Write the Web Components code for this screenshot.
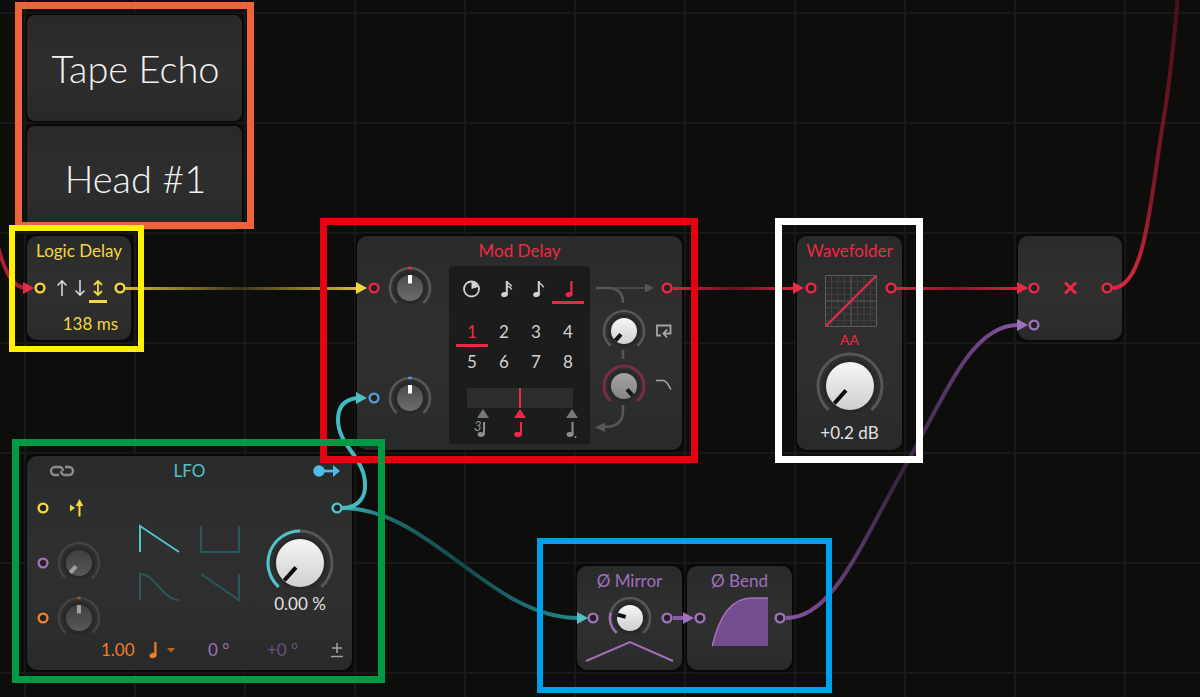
<!DOCTYPE html>
<html lang="en">
<head>
<meta charset="utf-8">
<meta name="viewport" content="width=device-width, initial-scale=1">
<title>Tape Echo patch</title>
<style>
  html, body { margin: 0; background: #0d0d0c; }
  body { font-family: Lato, "Open Sans", sans-serif; font-size: 17px; color: #e2e2e2; }
</style>
</head>
<body>
<patch-canvas>
  <comment-card style="--x:27px;--y:15px;--w:215px;--h:106px">Tape Echo</comment-card>
  <comment-card style="--x:27px;--y:126px;--w:215px;--h:104px">Head #1</comment-card>
  <logic-delay style="--x:27px;--y:236px;--w:104px;--h:104px"></logic-delay>
  <mod-delay style="--x:357px;--y:236px;--w:325px;--h:214px"></mod-delay>
  <wave-folder style="--x:797px;--y:236px;--w:105px;--h:214px"></wave-folder>
  <multiply-node style="--x:1018px;--y:236px;--w:104px;--h:104px"></multiply-node>
  <lfo-module style="--x:27px;--y:456px;--w:325px;--h:214px"></lfo-module>
  <phase-mirror style="--x:577px;--y:566px;--w:105px;--h:104px"></phase-mirror>
  <phase-bend style="--x:687px;--y:566px;--w:105px;--h:104px"></phase-bend>
  <patch-wires slot="overlay"></patch-wires>
  <group-frame slot="overlay" style="--x:15px;--y:2px;--w:239px;--h:227px;--c:#ef633b;--t:7px"></group-frame>
  <group-frame slot="overlay" style="--x:9px;--y:225px;--w:135px;--h:127px;--c:#fff200;--t:6px"></group-frame>
  <group-frame slot="overlay" style="--x:320px;--y:218px;--w:378px;--h:245px;--c:#e60012;--t:7px"></group-frame>
  <group-frame slot="overlay" style="--x:775px;--y:218px;--w:148px;--h:245px;--c:#ffffff;--t:7px"></group-frame>
  <group-frame slot="overlay" style="--x:12px;--y:439px;--w:373px;--h:244px;--c:#009944;--t:7px"></group-frame>
  <group-frame slot="overlay" style="--x:537px;--y:538px;--w:295px;--h:155px;--c:#00a0e9;--t:6px"></group-frame>
</patch-canvas>

<script>
const RED = '#ed2a45', YELLOW = '#f5d742', CYAN = '#4fc4cb', PURPLE = '#a070bd', ORANGE = '#f07f27', BLUE = '#5a9be0';

const reset = `
  *, *::before { box-sizing: border-box; }
  button { font: inherit; color: inherit; background: none; border: 0; padding: 0; margin: 0; line-height: inherit; text-align: left; }
  svg { display: block; }
  fieldset { border: 0; margin: 0; padding: 0; min-width: 0; }
  output { display: block; }
`;

function element(name, css, markup, ready) {
  const template = document.createElement('template');
  template.innerHTML = `<style>${reset}${css}</style>${markup}`;
  customElements.define(name, class extends HTMLElement {
    constructor() {
      super();
      this.attachShadow({ mode: 'open' }).append(template.content.cloneNode(true));
    }
    connectedCallback() { if (ready) ready(this, this.shadowRoot); }
  });
}

/* Free canvas with its 110px grid; each slotted node brings its own place. */
element('patch-canvas', `
  :host { display: block; position: relative; min-height: 100vh; overflow: hidden;
    background:
      linear-gradient(90deg, #191919 2px, transparent 2px) 24px 0 / 110px 110px,
      linear-gradient(#191919 2px, transparent 2px) 0 12px / 110px 110px, #0d0d0c; }
  ::slotted(*) { position: absolute; left: var(--x, 0); top: var(--y, 0); width: var(--w, 100%); min-height: var(--h, 0); }
  ::slotted(patch-wires) { bottom: 0; }
`, `<slot></slot><slot name="overlay"></slot>`);

element('group-frame', `
  :host { display: block; box-sizing: border-box; border: var(--t) solid var(--c); pointer-events: none; }
`, ``);

element('comment-card', `
  :host { display: flex; align-items: center; justify-content: center; border-radius: 8px;
    background: linear-gradient(#292929, #2e2e2e 50%, #272928); box-shadow: 0 0 3px 1px #050505; }
  h1 { margin: 0; padding-left: 2px; font-size: 38px; line-height: 44px; font-weight: 300; color: #f2f2f2; }
`, `<h1><slot></slot></h1>`);

element('module-card', `
  :host { display: block; min-height: inherit; border-radius: 10px;
    background: linear-gradient(#292a2a, #2f2f2f 40%, #2e2e2e 70%, #282a29); box-shadow: 0 0 3px 1px #050505; }
  header { display: grid; grid-template-columns: 1fr auto 1fr; align-items: center; height: 30px; padding: 0 12px; margin: 0 -12px; }
  :host([wide]) header { padding: 0 11px; margin: 0; }
  :host([untitled]) header { display: none; }
  h2 { margin: 0; font-size: 17px; line-height: 30px; font-weight: 400; color: var(--accent); white-space: nowrap; }
  .tail { justify-self: end; }
`, `<header><div><slot name="lead"></slot></div><h2><slot name="title"></slot></h2><div class="tail"><slot name="tail"></slot></div></header><slot></slot>`);

element('signal-port', `
  :host { display: block; width: 12px; height: 12px; flex: none; }
`, `<svg width="12" height="12"><circle cx="6" cy="6" r="4.4" fill="#222" stroke="currentColor" stroke-width="2.4"/></svg>`,
(host) => { host.style.color = host.getAttribute('color'); });

/* Rotary control: angles are in degrees clockwise from twelve o'clock. */
element('dial-knob', `
  :host { display: block; position: relative; width: 44px; height: 44px; flex: none; }
  :host([big]) { width: 68px; height: 68px; }
  input { position: absolute; inset: 0; width: 100%; height: 100%; margin: 0; opacity: 0; }
`, `<svg></svg><input type="range" min="-138" max="138">`,
(host, root) => {
  const get = (n, d) => host.getAttribute(n) || d;
  const big = host.hasAttribute('big'), c = big ? 34 : 22, R = big ? 32 : 20, r = big ? 24 : 13;
  const pt = (a, d) => `${c + d * Math.sin(a * Math.PI / 180)} ${c - d * Math.cos(a * Math.PI / 180)}`;
  const arc = (a, b, col) => `<path d="M${pt(a, R)} A${R} ${R} 0 ${b - a > 180 ? 1 : 0} 1 ${pt(b, R)}" fill="none" stroke="${col}" stroke-width="${big ? 3 : 2.6}"/>`;
  const angle = +get('angle', 0), face = get('face', 'dark'), to = get('to', '');
  const faces = { dark: ['#4c4c4c', '#6c6c6c'], dim: ['#3f3f3f', '#585858'], light: ['#f6f6f6', '#cfcfcf'], gray: ['#a4a4a4', '#868686'] };
  const svg = root.querySelector('svg');
  svg.setAttribute('width', 2 * c); svg.setAttribute('height', 2 * c);
  svg.innerHTML = `<defs><linearGradient id="f" x1="0" y1="0" x2="0" y2="1"><stop stop-color="${faces[face][0]}"/><stop offset="1" stop-color="${faces[face][1]}"/></linearGradient></defs>
    <circle cx="${c}" cy="${c}" r="${r + 3}" fill="#242525" opacity=".6"/>
    ${arc(-138, 138, get('track', '#575757'))}
    ${to ? arc(-138, +to, get('color')) : ''}
    ${host.hasAttribute('tick') ? arc(-5, 5, get('color')) : ''}
    <circle cx="${c}" cy="${c}" r="${r}" fill="url(#f)"/>
    <path d="M${pt(angle, big ? 6 : 4.5)} L${pt(angle, big ? 23.5 : 13)}" stroke="${get('pointer', '#fff')}" stroke-width="4"/>`;
  const input = root.querySelector('input');
  input.value = angle;
  input.setAttribute('aria-label', get('label', 'Amount'));
});

const icons = {
  up: [18, 18, `<path d="M9 17V2M4.5 6.5 9 2l4.5 4.5" fill="none" stroke="currentColor" stroke-width="1.6"/>`],
  down: [18, 18, `<path d="M9 1v15M4.5 11.5 9 16l4.5-4.5" fill="none" stroke="currentColor" stroke-width="1.6"/>`],
  both: [18, 18, `<path d="M9 2v14M5 6l4-4 4 4M5 12l4 4 4-4" fill="none" stroke="currentColor" stroke-width="1.8"/>`],
  clock: [18, 18, `<circle cx="8.5" cy="9" r="7.5" fill="none" stroke="currentColor" stroke-width="1.8"/><path d="M8.5 9V2a7 7 0 0 1 6.5 5z" fill="currentColor"/>`],
  quarter: [18, 18, `<ellipse cx="10" cy="14.5" rx="3.5" ry="2.6" transform="rotate(-12 10 14.5)" fill="currentColor"/><path d="M12.4 14.5V1" stroke="currentColor" stroke-width="2.2"/>`],
  eighth: [18, 18, `<ellipse cx="9.5" cy="14.5" rx="3.4" ry="2.5" transform="rotate(-12 9.5 14.5)" fill="currentColor"/><path d="M11.8 14.5V1" stroke="currentColor" stroke-width="2"/><path d="M12 1.5c.5 3 4 3 4.5 6" fill="none" stroke="currentColor" stroke-width="1.5"/>`],
  sixteenth: [18, 18, `<ellipse cx="9.5" cy="14.5" rx="3.4" ry="2.5" transform="rotate(-12 9.5 14.5)" fill="currentColor"/><path d="M11.8 14.5V1" stroke="currentColor" stroke-width="2"/><path d="M12 1.5c.8 2.5 4 2.5 4.5 5M12 5c.8 2.5 4 2 4.5 4.5" fill="none" stroke="currentColor" stroke-width="1.4"/>`],
  loop: [18, 18, `<path d="M6 13.5H2V3.5H15.5V11.5H9M12 7.5 8.5 11.5 12 15.5" fill="none" stroke="currentColor" stroke-width="1.8"/>`],
  lowpass: [18, 18, `<path d="M1 3.5H8C12 3.5 13 8 16 12.5" fill="none" stroke="currentColor" stroke-width="1.5"/>`],
  link: [26, 12, `<g fill="none" stroke="currentColor" stroke-width="2.4"><path d="M10 10H6a4 4 0 0 1 0-8H10c2.500 0 4 1.500 4 4"/><path d="M16 2H20a4 4 0 0 1 0 8H16c-2.500 0-4-1.500-4-4"/></g>`],
  send: [28, 14, `<circle cx="6" cy="7" r="5.7" fill="currentColor"/><path d="M8 7h13" stroke="currentColor" stroke-width="2.6"/><path d="M20 1 27 7l-7 6z" fill="currentColor"/>`],
  trigger: [18, 18, `<path d="M0 5.5 5 9l-5 3.5z" fill="currentColor"/><path d="M9.5 17.5V5" stroke="currentColor" stroke-width="2"/><path d="M5.7 7 9.5 0l3.8 7z" fill="currentColor"/>`],
  caret: [10, 6, `<path d="M1 1h8L5 5.5z" fill="currentColor"/>`],
  times: [14, 14, `<path d="M1 1.5l11 11M12 1.5l-11 11" stroke="currentColor" stroke-width="3"/>`],
  plusminus: [12, 16, `<path d="M6 1v10M1 6h10M0 14.5h12" stroke="currentColor" stroke-width="1.6"/>`]
};
element('glyph-icon', `:host { display: block; flex: none; }`, `<svg aria-hidden="true"></svg>`, (host, root) => {
  const [w, h, body] = icons[host.getAttribute('name')], svg = root.querySelector('svg');
  svg.setAttribute('width', w); svg.setAttribute('height', h); svg.innerHTML = body;
});

/* One option of a choice row: a radio whose label carries the underline. */
const option = (group, label, content, on) =>
  `<label><input type="radio" name="${group}" aria-label="${label}"${on ? ' checked' : ''}><span>${content}</span></label>`;
const optionCss = `
  label { position: relative; display: block; }
  label input { position: absolute; inset: 0; margin: 0; width: 100%; height: 100%; opacity: 0; }
  label span { display: flex; align-items: center; justify-content: center; }
`;

element('logic-delay', `
  :host { display: block; }
  module-card { --accent: ${YELLOW}; }
  .row { display: flex; align-items: center; justify-content: space-between; height: 44px; padding: 0 5px 0 7px; }
  fieldset { display: flex; }
  ${optionCss}
  label span { width: 18px; height: 30px; color: #d6d6d6; }
  input:checked + span { color: ${YELLOW}; box-shadow: inset 0 -3px ${YELLOW}; }
  output { padding-right: 13px; text-align: right; line-height: 28px; color: ${YELLOW}; }
`, `<module-card><span slot="title">Logic Delay</span>
  <div class="row"><signal-port color="${YELLOW}"></signal-port>
    <fieldset aria-label="Edge">${option('edge', 'Rising', '<glyph-icon name="up"></glyph-icon>')}${option('edge', 'Falling', '<glyph-icon name="down"></glyph-icon>')}${option('edge', 'Both', '<glyph-icon name="both"></glyph-icon>', true)}</fieldset>
    <signal-port color="${YELLOW}"></signal-port></div>
  <output>138 ms</output></module-card>`);

element('mod-delay', `
  :host { display: block; }
  module-card { --accent: ${RED}; }
  .body { display: grid; grid-template-columns: 92px 141px 1fr; }
  .inputs { display: flex; flex-direction: column; gap: 66px; padding-left: 11px; }
  .inputs div { display: flex; align-items: center; gap: 8px; }
  .panel { height: 178px; padding: 8px 6px 0 7px; background: #1b1c1c; border-radius: 4px; }
  fieldset { display: grid; grid-template-columns: repeat(4, 32px); }
  .beats { margin-top: 13px; }
  ${optionCss}
  label span { height: 30px; line-height: 30px; color: #d2d2d2; }
  input:checked + span { color: ${RED}; box-shadow: inset 0 -3px ${RED}; }
  .slider { position: relative; height: 20px; margin: 11px 11px 0; border-radius: 3px;
    background: linear-gradient(${RED}, ${RED}) center / 2px 100% no-repeat, #2d2d2d; }
  .slider input { position: absolute; inset: 0; width: 100%; height: 100%; margin: 0; opacity: 0; }
  .markers { margin-left: -7px; font-size: 13px; font-style: italic; }
  .routing { display: grid; }
  .routing > * { grid-area: 1 / 1; }
  .rows { display: grid; grid-template-rows: 32px 44px 44px; row-gap: 11px; align-content: start; color: #a6a6a6; }
  .rows div { display: flex; align-items: center; gap: 9px; padding-left: 12px; }
  .rows .out { justify-content: flex-end; height: 44px; padding: 0 9px 0 0; }
`, `<module-card><span slot="title">Mod Delay</span><div class="body">
  <div class="inputs">
    <div><signal-port color="${RED}"></signal-port><dial-knob label="Delay modulation" tick color="${RED}"></dial-knob></div>
    <div><signal-port color="${BLUE}"></signal-port><dial-knob label="Rate modulation" tick color="${BLUE}"></dial-knob></div>
  </div>
  <div class="panel">
    <fieldset aria-label="Unit">${[['Time', 'clock'], ['Sixteenth', 'sixteenth'], ['Eighth', 'eighth'], ['Quarter', 'quarter']].map(([l, i], n) => option('unit', l, `<glyph-icon name="${i}"></glyph-icon>`, n === 3)).join('')}</fieldset>
    <fieldset class="beats" aria-label="Count">${[1, 2, 3, 4, 5, 6, 7, 8].map(n => option('count', n, n, n === 1)).join('')}</fieldset>
    <div class="slider"><input type="range" aria-label="Offset"></div>
    <svg class="markers" width="141" height="36" fill="#8e8e8e">
      <path d="M28 10 34 1l6 9zM117 10 123 1l6 9z" fill="#777"/><path d="M65 10 71 1l6 9z" fill="${RED}"/>
      <ellipse cx="32" cy="26.5" rx="3.4" ry="2.4"/><path d="M34 14h2v13h-2z"/>
      <text x="25" y="23">3</text>
      <ellipse cx="69" cy="26.5" rx="3.8" ry="2.8" fill="${RED}"/><path d="M71 14h2v13h-2z" fill="${RED}"/>
      <ellipse cx="121" cy="26.5" rx="3.4" ry="2.4"/><path d="M122.5 14h2v13h-2z"/><circle cx="126.5" cy="29" r="1"/>
    </svg>
  </div>
  <div class="routing">
    <svg width="92" height="184" fill="none" stroke="#575757" stroke-width="2.6" aria-hidden="true">
      <path d="M6 22H56" stroke="#484848" stroke-width="2"/><path d="M55 17.5 64 22l-9 4.5z" fill="#575757" stroke="none"/>
      <path d="M6 22H18C28 22 33 27 33 37M33 84V93M33 139V145C33 156 26 161 14 161"/><path d="M15 156.5 5 161.5l10 4.5z" fill="#575757" stroke="none"/>
    </svg>
    <div class="rows">
      <div class="out"><signal-port color="${RED}"></signal-port></div>
      <div><dial-knob label="Feedback" face="light" pointer="#111" angle="-138"></dial-knob><glyph-icon name="loop"></glyph-icon></div>
      <div><dial-knob label="Low-pass" face="gray" pointer="#161616" angle="138" to="138" color="#7d2b3a"></dial-knob><glyph-icon name="lowpass"></glyph-icon></div>
    </div>
  </div></div></module-card>`);

element('wave-folder', `
  :host { display: block; }
  module-card { --accent: ${RED}; }
  .row { display: flex; align-items: flex-start; justify-content: space-between; padding: 9px 5px 0 8px; }
  signal-port { margin-top: 7px; }
  button { display: block; margin: 4px auto 3px; font-size: 14px; line-height: 18px; color: ${RED}; }
  dial-knob { margin: 0 auto; }
  output { text-align: center; line-height: 26px; }
`, `<module-card><span slot="title">Wavefolder</span>
  <div class="row"><signal-port color="${RED}"></signal-port>
    <svg width="52" height="52" fill="none" aria-hidden="true">
      <path d="M6.5 0V52M13 0V52M19.5 0V52M32.5 0V52M39 0V52M45.5 0V52M0 6.5H52M0 13H52M0 19.5H52M0 32.5H52M0 39H52M0 45.5H52" stroke="#3f3f3f"/>
      <path d="M.5.5H51.5V51.5H.5zM26 0V52M0 26H52" stroke="#5c5c5c"/><path d="M1 51 51 1" stroke="${RED}" stroke-width="2"/></svg>
    <signal-port color="${RED}"></signal-port></div>
  <button type="button" aria-pressed="true">AA</button>
  <dial-knob big label="Drive" face="light" pointer="#0a0a0a" angle="-138"></dial-knob>
  <output>+0.2 dB</output></module-card>`);

element('multiply-node', `
  :host { display: block; }
  .rows { display: grid; gap: 7px; padding: 37px 9px 0 10px; }
  .rows div { display: flex; align-items: center; justify-content: space-between; height: 30px; color: ${RED}; }
`, `<module-card untitled><div class="rows">
  <div><signal-port color="${RED}"></signal-port><glyph-icon name="times"></glyph-icon><signal-port color="${RED}"></signal-port></div>
  <div><signal-port color="${PURPLE}"></signal-port></div></div></module-card>`);

element('lfo-module', `
  :host { display: block; }
  module-card { --accent: ${CYAN}; }
  .link { display: block; margin-left: 11px; color: #8c8c8c; }
  .send { display: block; color: #4fbdec; }
  .body { display: grid; grid-template-columns: 111px 103px 1fr; }
  .inputs { display: grid; gap: 11px; padding-left: 10px; }
  .inputs div { display: flex; align-items: center; gap: 8px; height: 44px; }
  .trigger { width: 44px; display: flex; justify-content: center; color: ${YELLOW}; }
  .shapes { display: grid; grid-template-columns: 42px 42px; gap: 18px 19px; align-content: start; padding-top: 38px; }
  .amount { padding-left: 25px; }
  .amount signal-port { margin: 16px 0 15px 65px; }
  output { width: 68px; text-align: center; line-height: 14px; }
  ${optionCss}
  label span { height: 30px; color: #27585b; }
  input:checked + span { color: ${CYAN}; }
  footer { display: grid; grid-template-columns: 48px 59px 59px 64px 1fr; align-items: center; height: 20px; padding-left: 74px; line-height: 20px; white-space: nowrap; }
  .orange { color: ${ORANGE}; } .purple { color: ${PURPLE}; } .faint { color: #6d4f80; }
  .length { display: flex; align-items: center; gap: 5px; margin-left: -6px; }
  .length glyph-icon + glyph-icon { opacity: .7; }
  .sign { color: #a0a0a0; }
`, `<module-card wide><button slot="lead" class="link" type="button" aria-label="Link"><glyph-icon name="link"></glyph-icon></button>
  <span slot="title">LFO</span>
  <button slot="tail" class="send" type="button" aria-label="Modulation output"><glyph-icon name="send"></glyph-icon></button>
  <div class="body">
    <div class="inputs">
      <div><signal-port color="${YELLOW}"></signal-port><button class="trigger" type="button" aria-label="Retrigger"><glyph-icon name="trigger"></glyph-icon></button></div>
      <div><signal-port color="${PURPLE}"></signal-port><dial-knob label="Phase modulation" face="dim" track="#424242" pointer="#a0a0a0" angle="-138"></dial-knob></div>
      <div><signal-port color="${ORANGE}"></signal-port><dial-knob label="Rate modulation" face="dim" track="#424242" pointer="#a0a0a0" tick color="#9a5829"></dial-knob></div>
    </div>
    <fieldset class="shapes" aria-label="Shape">${[
      ['Saw', 'M2 28V2L41 28'], ['Square', 'M2 2V28H40V2'], ['Curved', 'M2 28V2C18 2 24 28 41 28'], ['Ramp', 'M2 2 40 28V2']
    ].map(([l, d], n) => option('shape', l, `<svg width="42" height="30" fill="none" stroke="currentColor" stroke-width="2"><path d="${d}"/></svg>`, n === 0)).join('')}</fieldset>
    <div class="amount"><signal-port color="${CYAN}"></signal-port>
      <dial-knob big label="Amount" face="light" pointer="#0a0a0a" angle="-138" to="0" color="${CYAN}"></dial-knob>
      <output>0.00 %</output></div>
  </div>
  <footer><span class="orange">1.00</span>
    <button type="button" class="length orange" aria-label="Note length" aria-haspopup="true"><glyph-icon name="quarter"></glyph-icon><glyph-icon name="caret"></glyph-icon></button>
    <span class="purple">0 °</span><span class="faint">+0 °</span><button type="button" class="sign" aria-label="Bipolar"><glyph-icon name="plusminus"></glyph-icon></button></footer></module-card>`);

element('phase-mirror', `
  :host { display: block; }
  module-card { --accent: ${PURPLE}; }
  .row { display: flex; align-items: center; justify-content: space-between; padding: 0 9px 0 10px; }
`, `<module-card><span slot="title">Ø Mirror</span>
  <div class="row"><signal-port color="${PURPLE}"></signal-port><dial-knob label="Mirror" face="light" pointer="#0a0a0a" angle="-75" to="-75" color="${PURPLE}"></dial-knob><signal-port color="${PURPLE}"></signal-port></div>
  <svg width="105" height="24" aria-hidden="true"><path d="M9 21 53 2 96 21" fill="none" stroke="${PURPLE}" stroke-width="2"/></svg></module-card>`);

element('phase-bend', `
  :host { display: block; }
  module-card { --accent: ${PURPLE}; }
  .row { display: flex; align-items: flex-start; justify-content: space-between; padding: 1px 6px 0 7px; }
  signal-port { margin-top: 15px; }
`, `<module-card><span slot="title">Ø Bend</span>
  <div class="row"><signal-port color="${PURPLE}"></signal-port>
  <svg width="56" height="50" aria-hidden="true"><path d="M0 49C8 17 20 1 40 1H56V49z" fill="#764c91"/><path d="M0 49.5C8 17 20 1 40 1H56" fill="none" stroke="${PURPLE}" stroke-width="1.5"/></svg>
  <signal-port color="${PURPLE}"></signal-port></div></module-card>`);

/* Cables between ports; each fades towards its middle. */
const fade = (id, x1, x2, bright, dark) => `<linearGradient id="${id}" gradientUnits="userSpaceOnUse" x1="${x1}" y1="0" x2="${x2}" y2="0"><stop stop-color="${bright}"/><stop offset=".5" stop-color="${dark}"/><stop offset="1" stop-color="${bright}"/></linearGradient>`;
const head = (x, y, c) => `<path d="M${x - 11} ${y - 6} ${x} ${y}l-11 6z" fill="${c}"/>`;
element('patch-wires', `
  :host { display: block; pointer-events: none; }
  svg { width: 100%; height: 100%; }
`, `<svg aria-hidden="true"><defs>
    ${fade('y', 125, 357, '#d3b93a', '#3d371a')}${fade('r1', 673, 794, '#d0273f', '#62141f')}${fade('r2', 896, 1018, '#d0273f', '#84192a')}
    ${fade('p', 786, 1018, '#8a55a5', '#36223f')}
    <linearGradient id="t" gradientUnits="userSpaceOnUse" x1="342" y1="0" x2="577" y2="0"><stop stop-color="#3db4ba"/><stop offset=".2" stop-color="#1d6c6f"/><stop offset=".5" stop-color="#124849"/><stop offset="1" stop-color="#25898d"/></linearGradient>
    <linearGradient id="u" gradientUnits="userSpaceOnUse" x1="0" y1="288" x2="0" y2="0"><stop stop-color="#d92840"/><stop offset=".3" stop-color="#85192a"/><stop offset="1" stop-color="#480f19"/></linearGradient>
  </defs>
  <g fill="none" stroke-width="4">
    <path d="M-4 240C4 270 12 288 26 288" stroke="#a82036"/>
    <path d="M125 287H357V290H125z" fill="url(#y)"/>
    <path d="M673 287H794V290H673z" fill="url(#r1)"/>
    <path d="M896 287H1018V290H896z" fill="url(#r2)"/>
    <path d="M342 508C430 508 490 618 578 618" stroke="url(#t)"/>
    <path d="M342 508C360 508 366 495 365 483C364 457 338 445 338 420C338 406 345 399 358 398" stroke="#45bac1"/>
    <path d="M673 618H686" stroke="#8a5aa8"/>
    <path d="M786 618C832 618 858 550 903 470C948 390 972 325 1018 325" stroke="url(#p)"/>
    <path d="M1112 288C1146 288 1150 200 1163 123C1170 80 1175 30 1178 -5" stroke="url(#u)"/>
  </g>
  ${head(34, 288, RED)}${head(367, 288, YELLOW)}${head(367, 398, '#4fbfc8')}${head(804, 288, RED)}${head(1028, 288, RED)}
  ${head(1028, 325, PURPLE)}${head(588, 618, '#4fbfc8')}${head(694, 618, PURPLE)}
  </svg>`);
</script>
</body>
</html>
